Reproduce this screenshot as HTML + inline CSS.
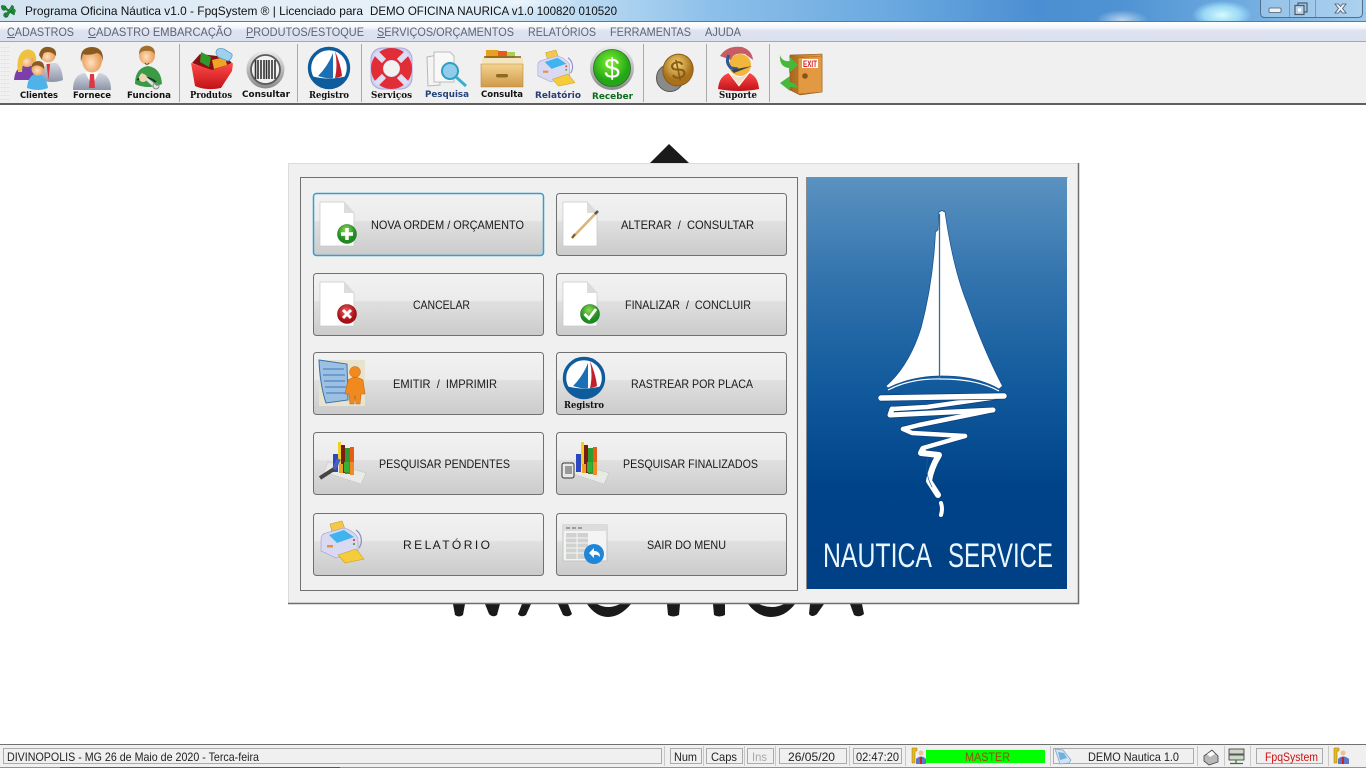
<!DOCTYPE html>
<html lang="pt"><head><meta charset="utf-8"><title>Programa Oficina Náutica</title>
<style>
html,body{margin:0;padding:0;width:1366px;height:768px;overflow:hidden;background:#fff}
svg{position:absolute;left:0;top:0;display:block}
text{font-family:"Liberation Sans",sans-serif;white-space:pre}
.ti{font-size:12px;fill:#111}
.me{font-size:12px;fill:#5c6474}
.tb{font-family:"DejaVu Sans",sans-serif;font-size:9px;font-weight:bold;fill:#111}
.ts{font-family:"DejaVu Serif",serif;font-size:9px;font-weight:bold;fill:#111}
.bt{font-size:12px;fill:#1a1a1a}
.st{font-size:12px;fill:#222}
</style></head><body>
<svg width="1366" height="768" viewBox="0 0 1366 768" xmlns="http://www.w3.org/2000/svg">
<defs>
<linearGradient id="tbar" x1="0" x2="1" y1="0" y2="0">
<stop offset="0" stop-color="#d3e3f1"/><stop offset=".2" stop-color="#e4eef7"/><stop offset=".33" stop-color="#e6f2fb"/><stop offset=".42" stop-color="#bfdcf3"/><stop offset=".52" stop-color="#8dc0ea"/><stop offset=".65" stop-color="#6ba9e0"/><stop offset=".76" stop-color="#4b8fd2"/><stop offset=".82" stop-color="#4f93d3"/><stop offset=".9" stop-color="#6ba8df"/><stop offset="1" stop-color="#9cc8ec"/>
</linearGradient>
<radialGradient id="glow"><stop offset="0" stop-color="#d8fbff"/><stop offset=".6" stop-color="#a8e6fb" stop-opacity=".8"/><stop offset="1" stop-color="#a8e6fb" stop-opacity="0"/></radialGradient>
<radialGradient id="glow2"><stop offset="0" stop-color="#fff" stop-opacity=".6"/><stop offset="1" stop-color="#fff" stop-opacity="0"/></radialGradient>
<linearGradient id="menu" x1="0" x2="0" y1="0" y2="1"><stop offset="0" stop-color="#fff"/><stop offset=".3" stop-color="#f4f6fb"/><stop offset=".45" stop-color="#dfe3f0"/><stop offset="1" stop-color="#dbe0ee"/></linearGradient>
<linearGradient id="btn" x1="0" x2="0" y1="0" y2="1"><stop offset="0" stop-color="#f2f2f2"/><stop offset=".44" stop-color="#ebebeb"/><stop offset=".45" stop-color="#e0e0e0"/><stop offset="1" stop-color="#cbcbcb"/></linearGradient>
<linearGradient id="blue" x1="0" x2="0" y1="0" y2="1"><stop offset="0" stop-color="#5a92c0"/><stop offset=".25" stop-color="#3273ad"/><stop offset=".5" stop-color="#125b9d"/><stop offset=".75" stop-color="#004389"/><stop offset="1" stop-color="#004085"/></linearGradient>
<linearGradient id="gray" x1="0" x2="0" y1="0" y2="1"><stop offset="0" stop-color="#d4d8e2"/><stop offset="1" stop-color="#8d94a8"/></linearGradient>
<radialGradient id="skin" cx=".45" cy=".6"><stop offset="0" stop-color="#ffe0bd"/><stop offset="1" stop-color="#e89f5e"/></radialGradient>
<linearGradient id="red" x1="0" x2="0" y1="0" y2="1"><stop offset="0" stop-color="#ff4a4a"/><stop offset="1" stop-color="#c01216"/></linearGradient>
<radialGradient id="grn" cx=".45" cy=".35"><stop offset="0" stop-color="#80f030"/><stop offset="1" stop-color="#22a816"/></radialGradient>
<radialGradient id="rb" cx=".45" cy=".35"><stop offset="0" stop-color="#f06060"/><stop offset="1" stop-color="#a80f14"/></radialGradient>
<radialGradient id="gb" cx=".45" cy=".3"><stop offset="0" stop-color="#8fdc50"/><stop offset="1" stop-color="#1f8a22"/></radialGradient>
<linearGradient id="wood" x1="0" x2="0" y1="0" y2="1"><stop offset="0" stop-color="#f3d391"/><stop offset="1" stop-color="#cf9a48"/></linearGradient>
<radialGradient id="gold" cx=".4" cy=".35"><stop offset="0" stop-color="#f6d77a"/><stop offset="1" stop-color="#a8701a"/></radialGradient>
<linearGradient id="door" x1="0" x2="1" y1="0" y2="0"><stop offset="0" stop-color="#a8661c"/><stop offset="1" stop-color="#e8a750"/></linearGradient>
<linearGradient id="silver" x1="0" x2="0" y1="0" y2="1"><stop offset="0" stop-color="#ececec"/><stop offset="1" stop-color="#8a8a8a"/></linearGradient>

<g id="reg">
<circle cx="0" cy="0" r="19.500" fill="#fff" stroke="#0f5c9c" stroke-width="3.400"/>
<path d="M-18,8 Q0,13 18,8 A19.500,19.500 0 0 1 -18,8Z" fill="#0f5c9c"/>
<path d="M4,-15 Q-1,-2 -11,8 Q-2,11 4,10Z" fill="#1a6fb5"/>
<path d="M6,-17 Q12,-3 13,8 Q9,10 6,10Q9,-3 6,-17Z" fill="#c3202c"/>
</g>
<g id="pr">
<path d="M10,3 L22,0 L26,11 L13,14Z" fill="#f2c94c" stroke="#c99a25" stroke-width=".6"/>
<path d="M1,18 Q1,13 6,12 L24,7 Q34,10 38,17 L38,31 L16,37 L1,30Z" fill="#d9d9f2" stroke="#a8a8d0" stroke-width=".7"/>
<path d="M9,14 L24,9 L34,16 L17,22Z" fill="#3fb4ee"/>
<path d="M36,9 A13,13 0 0 1 39,27" fill="none" stroke="#8f8fcc" stroke-width="1.300"/>
<path d="M18,34 L36,28 L44,38 L25,42Z" fill="#f4cc3c" stroke="#d0a01c" stroke-width=".6"/>
<circle cx="34" cy="19" r="1.100" fill="#d44"/><circle cx="34" cy="23" r="1.100" fill="#4a4"/>
<rect x="7" y="24" width="6" height="2.500" fill="#e8903c"/>
</g>
<g id="bars">
<path d="M10,20 L48,31 L43,42 L6,30Z" fill="#e9e9e6" stroke="#bbb" stroke-width=".6" stroke-dasharray="1.500 1"/>
<rect x="15" y="12" width="5" height="18" fill="#2c48c0"/>
<rect x="20" y="0" width="3" height="22" fill="#f0d020"/>
<rect x="23" y="3" width="4" height="28" fill="#7a1c10"/>
<rect x="27" y="6" width="5" height="26" fill="#2c9c30"/>
<rect x="32" y="5" width="4" height="22" fill="#e85c18"/>
<rect x="26" y="20" width="5" height="10" fill="#35b03a"/>
<rect x="21" y="22" width="4" height="9" fill="#f0a020"/>
<rect x="32" y="20" width="4" height="13" fill="#ef8a24"/>
</g>
<g id="doc"><path d="M0,0 H24 L34,11 V44 H0Z" fill="#fff" stroke="#c8c8c8" stroke-width=".7"/><path d="M24,0 L34,11 H24Z" fill="#dcdcdc"/></g>
</defs>

<!-- background -->
<rect width="1366" height="768" fill="#fff"/>
<!-- behind-panel logo -->
<path d="M650,163 L669,144 L689,163Z" fill="#1a1a1a"/>
<g fill="#1a1a1a">
<path d="M453,604H465L463,615Q459,618 455,615Z"/><path d="M485,604H500L497,615Q493,618 489,614Z"/><path d="M518,614L522,604H531L526,615Q521,618 518,614Z"/><path d="M558,604H568L572,614Q568,618 563,615Z"/>
<path d="M587,604H597Q608,610 620,604H631Q620,617 608,617Q596,617 587,604Z"/>
<path d="M667,604H680L679,615Q673,618 668,615Z"/><path d="M713,604H725L725,615Q719,618 714,615Z"/>
<path d="M748,604H759Q772,610 784,604H795Q785,617 771,617Q758,617 748,604Z"/>
<path d="M810,604H824L817,614Q812,618 809,614Z"/><path d="M850,604H862L864,614Q859,618 854,615Z"/>
</g>

<!-- title bar -->
<rect width="1366" height="21" fill="url(#tbar)"/>
<ellipse cx="520" cy="2" rx="60" ry="12" fill="url(#glow2)"/>
<ellipse cx="1122" cy="20" rx="26" ry="10" fill="url(#glow2)"/>
<ellipse cx="1222" cy="15" rx="30" ry="14" fill="url(#glow)"/>
<rect y="21" width="1366" height="1" fill="#64788a"/>
<!-- app icon -->
<g fill="#1f8c3a" stroke="#0f5c24" stroke-width=".5"><circle cx="4" cy="8" r="2.400"/><circle cx="13" cy="11" r="2.400"/><circle cx="6" cy="15" r="2.400"/><path d="M2,5L15,14L14,15L1,7Z"/><path d="M12,5L5,16L7,17L14,7Z"/></g>
<text class="ti" x="25" y="15" textLength="338" lengthAdjust="spacingAndGlyphs">Programa Oficina Náutica v1.0 - FpqSystem ® | Licenciado para</text>
<text class="ti" x="370" y="15" textLength="247" lengthAdjust="spacingAndGlyphs">DEMO OFICINA NAURICA v1.0 100820 010520</text>
<!-- window controls -->
<path d="M1260.500,0 V13 Q1260.500,17.500 1265,17.500 H1358 Q1362.500,17.500 1362.500,13 V0" fill="#c4dff3" fill-opacity=".4" stroke="#4f6f8c"/>
<path d="M1289.500,0V17M1315.500,0V17" stroke="#6f8fac" stroke-opacity=".8"/>
<rect x="1269" y="8" width="12" height="4.500" rx="1" fill="#eef2f6" stroke="#4a5a6a" stroke-width=".8"/>
<rect x="1298" y="3" width="9" height="9" fill="none" stroke="#4a5a6a" stroke-width="1.200"/><rect x="1295" y="5.500" width="9" height="9" fill="#b9d3ea" stroke="#4a5a6a" stroke-width="1.200"/><rect x="1298" y="8.500" width="3" height="3" fill="#fff"/>
<path d="M1335,4H1338.500L1340.500,6.500L1342.500,4H1346L1342.500,8.500L1346,13H1342.500L1340.500,10.500L1338.500,13H1335L1338.500,8.500Z" fill="#eef2f6" stroke="#4a5a6a" stroke-width=".8"/>

<!-- menu -->
<rect y="22" width="1366" height="19" fill="url(#menu)"/>
<rect y="41" width="1366" height="1" fill="#a8a8a8"/>
<text class="me" x="7" y="36" textLength="67" lengthAdjust="spacingAndGlyphs">CADASTROS</text>
<text class="me" x="88" y="36" textLength="144" lengthAdjust="spacingAndGlyphs">CADASTRO EMBARCAÇÃO</text>
<text class="me" x="246" y="36" textLength="118" lengthAdjust="spacingAndGlyphs">PRODUTOS/ESTOQUE</text>
<text class="me" x="377" y="36" textLength="137" lengthAdjust="spacingAndGlyphs">SERVIÇOS/ORÇAMENTOS</text>
<text class="me" x="528" y="36" textLength="68" lengthAdjust="spacingAndGlyphs">RELATÓRIOS</text>
<text class="me" x="610" y="36" textLength="81" lengthAdjust="spacingAndGlyphs">FERRAMENTAS</text>
<text class="me" x="705" y="36" textLength="36" lengthAdjust="spacingAndGlyphs">AJUDA</text>
<path d="M7,37.500H15M88,37.500H96M246,37.500H254M377,37.500H385" stroke="#5c6474"/>

<!-- toolbar -->
<rect y="42" width="1366" height="61" fill="#f0f0f0"/>
<rect y="103" width="1366" height="2" fill="#5f5f5f"/>
<path d="M179.500,44V102M297.500,44V102M361.500,44V102M643.500,44V102M706.500,44V102M769.500,44V102" stroke="#a9a9a9"/>
<path d="M2,47V100M5,47V100M8,47V100" stroke="#d0d0d0" stroke-width="1" stroke-dasharray="1 3"/>

<!-- Clientes -->
<path d="M40,80 Q41,66 50,63 H56 Q62,66 63,80 Q53,84 40,80Z" fill="url(#gray)"/><path d="M46.500,64H50L48.500,80Z" fill="#d6303a"/>
<circle cx="48" cy="55" r="7.500" fill="url(#skin)"/><path d="M39,55Q41,46 49,47Q57,48 56,56Q50,50 44,53Q42,56 42,60Z" fill="#8a5a20"/>
<path d="M14,80 Q15,68 23,66 H31 Q38,68 38,80Z" fill="#7a3fa8"/>
<circle cx="27" cy="60" r="7" fill="url(#skin)"/><path d="M18,72 Q16,58 22,52 Q28,47 34,52 Q38,58 35,70 L33,58 Q27,57 23,60 L22,72Z" fill="#eec13e"/>
<path d="M27,88 Q28,75 37,73 Q46,75 48,88 Q38,92 27,88Z" fill="#4fb3e8"/>
<circle cx="38" cy="69" r="6.500" fill="url(#skin)"/><path d="M31,68Q32,61 39,61Q45,62 44,69Q39,64 34,66Z" fill="#8a5a20"/>
<!-- Fornece -->
<path d="M73,90 Q73,75 84,73 L100,73 Q111,75 111,90Z" fill="url(#gray)"/>
<path d="M85,72H99L92,86Z" fill="#fff"/><path d="M90,74H94L95,88H89Z" fill="#dc3742"/>
<ellipse cx="92" cy="60" rx="10" ry="12.500" fill="url(#skin)"/>
<path d="M81,62 Q79,47 92,47 Q104,47 103,62 Q102,54 97,53 Q88,56 83,54Z" fill="#8a5a20"/>
<!-- Funciona -->
<path d="M135,84 Q135,68 148,66 Q161,68 162,84 Q148,90 135,84Z" fill="#3a9a45"/>
<path d="M137,80 Q146,74 156,82" stroke="#1d2b22" stroke-width="1.500" fill="none"/>
<ellipse cx="147" cy="55" rx="8" ry="9.500" fill="url(#skin)"/>
<path d="M139,54Q139,46 147,46Q155,46 155,54Q151,50 147,51Q143,50 139,54Z" fill="#a0702c"/>
<path d="M145,63Q147,66 149,63" stroke="#6b4a20" fill="none"/>
<path d="M141,74 L157,88" stroke="#e0e0e0" stroke-width="3"/><circle cx="156" cy="86" r="3" fill="none" stroke="#888"/><circle cx="143" cy="78" r="4" fill="#f2d3b1"/>
<text class="tb" x="20" y="98" textLength="38" lengthAdjust="spacingAndGlyphs">Clientes</text>
<text class="tb" x="73" y="98" textLength="38" lengthAdjust="spacingAndGlyphs">Fornece</text>
<text class="tb" x="127" y="98" textLength="44" lengthAdjust="spacingAndGlyphs">Funciona</text>

<!-- Produtos -->
<path d="M192,63 L200,54 L226,57 L232,63 L213,71Z" fill="#8a1014"/>
<path d="M201,52 L211,57 L209,67 L200,62Z" fill="#2e9a2a"/>
<path d="M212,60 L225,57 L227,65 L214,69Z" fill="#eea424"/>
<path d="M216,53 Q216,47 224,49 L232,54 Q233,58 228,61 L218,57Z" fill="#9fd0ee" stroke="#5b9ccb" stroke-width=".8"/>
<path d="M191,63 L212,70 L233,63 L232,71 L221,88 Q206,91 195,86Z" fill="url(#red)"/>
<!-- Consultar -->
<circle cx="265.500" cy="69.500" r="19" fill="url(#silver)"/><circle cx="265.500" cy="69.500" r="14.500" fill="#f2f2f4" stroke="#5a5a5a" stroke-width="1.800"/>
<path d="M255.500,60V79M258,60V79M261,60V79M264,60V79M266.500,60V79M269,60V79M272,60V79M275,60V79" stroke="#333" stroke-width="1.600"/>
<text class="ts" x="190" y="98" textLength="42" lengthAdjust="spacingAndGlyphs">Produtos</text>
<text class="tb" x="242" y="97" textLength="48" lengthAdjust="spacingAndGlyphs">Consultar</text>

<use href="#reg" x="329" y="68"/>
<text class="ts" x="309" y="98" textLength="40" lengthAdjust="spacingAndGlyphs">Registro</text>

<!-- Lifebuoy -->
<rect x="371" y="48" width="41" height="41" rx="11" fill="#cfcff0" stroke="#a8a8dc"/>
<circle cx="391.500" cy="68.500" r="14.500" fill="none" stroke="#e02d38" stroke-width="12"/>
<path d="M384,61L376,53M399,61L407,53M384,76L376,84M399,76L407,84" stroke="#dcdcf2" stroke-width="6"/>
<circle cx="391.500" cy="68.500" r="8" fill="#f2f2f2"/>
<text class="ts" x="371" y="98" textLength="41" lengthAdjust="spacingAndGlyphs">Serviços</text>
<!-- Pesquisa -->
<path d="M427,57L438,55L440,85L428,86Z" fill="#f4f4f4" stroke="#b8b8b8"/>
<path d="M434,52H450L454,56V82H434Z" fill="#f8f8f8" stroke="#bcbcbc"/>
<circle cx="450" cy="71" r="8" fill="#8fcdea" stroke="#2fa0c4" stroke-width="2"/>
<path d="M456,77L466,86" stroke="#3ab0d0" stroke-width="3"/>
<text class="tb" x="425" y="97" textLength="44" lengthAdjust="spacingAndGlyphs" style="fill:#24437c">Pesquisa</text>
<!-- Consulta drawer -->
<path d="M486,50H498L500,53H512L510,60H486Z" fill="#e8a020"/><rect x="498" y="51" width="9" height="5" fill="#e85c18"/><rect x="507" y="52" width="8" height="6" fill="#a8d050"/>
<path d="M482,58H523V66H482Z" fill="#f4e4c0"/><path d="M484,57H521" stroke="#7a5a20" stroke-width="1.500"/>
<path d="M481,64H523V87H481Z" fill="url(#wood)" stroke="#b98c3e" stroke-width=".6"/>
<rect x="496" y="74" width="12" height="3.500" rx="1.700" fill="#8f6a24"/>
<text class="tb" x="481" y="97" textLength="42" lengthAdjust="spacingAndGlyphs">Consulta</text>
<use href="#pr" transform="translate(537,50) scale(.86)"/>
<text class="tb" x="535" y="98" textLength="46" lengthAdjust="spacingAndGlyphs" style="fill:#2b3d72">Relatório</text>
<!-- Receber -->
<circle cx="612" cy="68" r="22" fill="url(#silver)"/><circle cx="612" cy="68" r="18.500" fill="url(#grn)" stroke="#2a6a2a" stroke-width=".8"/>
<text x="612" y="78" text-anchor="middle" style="font-size:28px;fill:#fff">$</text>
<text class="tb" x="592" y="99" textLength="41" lengthAdjust="spacingAndGlyphs" style="fill:#0b6b1c">Receber</text>
<!-- Coin -->
<circle cx="670" cy="78" r="13.500" fill="#8a8a8a" stroke="#555"/>
<ellipse cx="678" cy="70" rx="15" ry="16" fill="url(#gold)" stroke="#8a5c14" transform="rotate(20 678 70)"/>
<text x="678" y="79" text-anchor="middle" style="font-size:26px;fill:#8a5a14" transform="rotate(-12 678 70)">$</text>
<!-- Suporte -->
<path d="M718,89 Q719,76 729,73 L739,84 L749,73 Q758,76 759,89Q739,93 718,89Z" fill="url(#red)"/>
<path d="M729,73L739,86L749,73L739,77Z" fill="#f2e0c8" stroke="#fff" stroke-width=".8"/>
<circle cx="740" cy="65" r="11" fill="#f2b63c"/>
<path d="M720,56 Q727,45 742,47 Q752,50 753,60 L745,54 Q733,52 731,60Z" fill="#c85c64"/>
<path d="M729,55 Q725,62 731,68 L738,69" fill="none" stroke="#2c5a9c" stroke-width="3"/>
<path d="M731,70 L752,66 L734,73Z" fill="#444"/>
<text class="ts" x="719" y="98" textLength="38" lengthAdjust="spacingAndGlyphs">Suporte</text>
<!-- Exit -->
<path d="M790,55 L822,54 L822,92 L800,95 L790,90Z" fill="url(#door)" stroke="#8a5418" stroke-width=".6"/>
<path d="M798,58 L822,56 L822,92 L798,94Z" fill="#e29a42" stroke="#a8661c" stroke-width=".6"/>
<rect x="802" y="59" width="16" height="9" fill="#fff"/>
<text x="810" y="67" text-anchor="middle" style="font-size:9px;font-weight:bold;fill:#d81818" textLength="14" lengthAdjust="spacingAndGlyphs">EXIT</text>
<circle cx="805" cy="76" r="2.800" fill="#8a5418"/>
<path d="M780,55 Q782,62 790,61 L789,56 L798,65 L789,73 L789,68 Q779,67 780,55Z" fill="#46b93a"/>
<path d="M798,88 Q794,82 790,82 L790,76 L780,83 L790,91 L790,87 Q795,87 798,88Z" fill="#46b93a"/>

<!-- panel -->
<rect x="288.500" y="163.500" width="790" height="440" fill="#f0f0f0" stroke="#dcdcdc"/>
<path d="M288,603.500H1078.500V163" fill="none" stroke="#6e6e6e" stroke-width="1.500"/>
<rect x="300.500" y="177.500" width="497" height="413" fill="#f0f0f0" stroke="#707070"/>

<g stroke="#707070" fill="url(#btn)">
<rect x="313.500" y="193.500" width="230" height="62" rx="3" stroke="#33a0cc" stroke-width="1.500"/>
<rect x="556.500" y="193.500" width="230" height="62" rx="3"/>
<rect x="313.500" y="273.500" width="230" height="62" rx="3"/>
<rect x="556.500" y="273.500" width="230" height="62" rx="3"/>
<rect x="313.500" y="352.500" width="230" height="62" rx="3"/>
<rect x="556.500" y="352.500" width="230" height="62" rx="3"/>
<rect x="313.500" y="432.500" width="230" height="62" rx="3"/>
<rect x="556.500" y="432.500" width="230" height="62" rx="3"/>
<rect x="313.500" y="513.500" width="230" height="62" rx="3"/>
<rect x="556.500" y="513.500" width="230" height="62" rx="3"/>
</g>

<text class="bt" x="371" y="229" textLength="153" lengthAdjust="spacingAndGlyphs">NOVA ORDEM / ORÇAMENTO</text>
<text class="bt" x="621" y="229" textLength="133" lengthAdjust="spacingAndGlyphs">ALTERAR  /  CONSULTAR</text>
<text class="bt" x="413" y="309" textLength="57" lengthAdjust="spacingAndGlyphs">CANCELAR</text>
<text class="bt" x="625" y="309" textLength="126" lengthAdjust="spacingAndGlyphs">FINALIZAR  /  CONCLUIR</text>
<text class="bt" x="393" y="388" textLength="104" lengthAdjust="spacingAndGlyphs">EMITIR  /  IMPRIMIR</text>
<text class="bt" x="631" y="388" textLength="122" lengthAdjust="spacingAndGlyphs">RASTREAR POR PLACA</text>
<text class="bt" x="379" y="468" textLength="131" lengthAdjust="spacingAndGlyphs">PESQUISAR PENDENTES</text>
<text class="bt" x="623" y="468" textLength="135" lengthAdjust="spacingAndGlyphs">PESQUISAR FINALIZADOS</text>
<text class="bt" x="403" y="549" textLength="87" lengthAdjust="spacing">R E L A T Ó R I O</text>
<text class="bt" x="647" y="549" textLength="79" lengthAdjust="spacingAndGlyphs">SAIR DO MENU</text>

<!-- button icons -->
<use href="#doc" x="320" y="202"/>
<circle cx="347" cy="234" r="9.500" fill="url(#gb)" stroke="#2b7a2b" stroke-width=".6"/><path d="M347,228V240M341,234H353" stroke="#fff" stroke-width="3.500"/>
<use href="#doc" x="563" y="202"/>
<path d="M572,238 L597,212" stroke="#dbb47a" stroke-width="2.600"/><path d="M572,238 L575,234" stroke="#7a5a20" stroke-width="2"/><path d="M595,214L598,211" stroke="#555" stroke-width="2.600"/>
<use href="#doc" x="320" y="282"/>
<circle cx="347" cy="314" r="9.500" fill="url(#rb)" stroke="#8a1414" stroke-width=".6"/><path d="M343,310L351,318M351,310L343,318" stroke="#fff" stroke-width="3"/>
<use href="#doc" x="563" y="282"/>
<circle cx="590" cy="314" r="9.500" fill="url(#gb)" stroke="#1f7a2b" stroke-width=".6"/><path d="M584.500,314L589,318.500L596,309" fill="none" stroke="#fff" stroke-width="2.800"/>
<!-- Emitir -->
<rect x="319" y="360" width="46" height="46" fill="#e8e3cf"/>
<path d="M319,360 L347,364 L348,400 L326,403Q320,385 319,360Z" fill="#9cc0e4" stroke="#3d70a8" stroke-width="1"/>
<path d="M323,369H344M323,375H345M324,381H345M325,387H346M326,393H346" stroke="#5d8fc4" stroke-width="1.500"/>
<circle cx="355" cy="372" r="5.500" fill="#f08a1e" stroke="#c06410" stroke-width=".5"/>
<path d="M348,380Q355,375 363,380L365,394H361L360,404H356L355,395L354,404H350L349,394H345Z" fill="#f08a1e" stroke="#c06410" stroke-width=".6"/>
<!-- Registro btn -->
<use href="#reg" x="584" y="378"/>
<text class="ts" x="564" y="408" textLength="40" lengthAdjust="spacingAndGlyphs">Registro</text>
<!-- Bars -->
<use href="#bars" x="318" y="442"/>
<path d="M320,478L334,469" stroke="#444" stroke-width="4"/><path d="M334,469L339,459" stroke="#4a60c0" stroke-width="4"/>
<use href="#bars" x="561" y="442"/>
<rect x="562" y="463" width="12" height="15" rx="2" fill="#e8e8e8" stroke="#333"/><rect x="565" y="466" width="7" height="8" fill="#999"/>
<use href="#pr" transform="translate(320,521)"/>
<!-- Sair -->
<rect x="563" y="525" width="44" height="36" fill="#f4f4f4" stroke="#c4c4c4"/>
<rect x="563" y="525" width="44" height="6" fill="#dcdcdc"/>
<path d="M566,528H570M572,528H576M578,528H582" stroke="#888" stroke-width="1.500"/>
<rect x="566" y="533" width="22" height="26" fill="#cfd2cf"/>
<path d="M566,538H588M566,543H588M566,548H588M566,553H588M577,533V559" stroke="#f4f4f4"/>
<circle cx="594" cy="554" r="10" fill="#1f86d8"/>
<path d="M589,553L594,548V551Q600,551 600,557Q597,554 594,555V558Z" fill="#fff"/>

<!-- Blue image -->
<path d="M806.500,589.500V177.500H1067.500" fill="none" stroke="#8a8a8a"/>
<rect x="807" y="178" width="260" height="411" fill="url(#blue)"/>
<g transform="translate(807,178)">
<path d="M135,32.500 L138,34 Q146,90 160,125 Q178,175 195.500,208 L192,211 Q170,198 135,198 Q105,198 81,210 L79,208 Q102,188 114,150 Q126,105 128.500,54 L131,52 L132,34Z" fill="#fff" stroke="#0f4f90" stroke-width=".7"/>
<path d="M132.500,36V200" stroke="#35689c" stroke-width="1.300"/>
<path d="M81,212 Q104,200 135,201 Q170,201 192,213" fill="none" stroke="#fff" stroke-width="1.200"/>
<g fill="none" stroke-linejoin="round" stroke-linecap="round">
<g stroke="#0b3f7c"><path d="M116,271 L114,275 L132,277 Q124,290 122,303 L131,317" stroke-width="7.500"/><path d="M158,258 L116,270" stroke-width="6"/><path d="M96,251 L105,255 L158,258" stroke-width="6"/><path d="M186,232 L112,247 L96,251" stroke-width="6"/><path d="M85,231 L83,237 L186,232" stroke-width="6.500"/><path d="M197,218 L120,229 L85,231" stroke-width="6"/></g>
<path d="M116,271 L114,275 L132,277 Q124,290 122,303 L131,317" stroke="#fff" stroke-width="6"/>
<path d="M158,258 L116,270" stroke="#fff" stroke-width="4.500"/>
<path d="M96,251 L105,255 L158,258" stroke="#fff" stroke-width="4.500"/>
<path d="M186,232 L112,247 L96,251" stroke="#fff" stroke-width="4.500"/>
<path d="M85,231 L83,237 L186,232" stroke="#fff" stroke-width="5"/>
<path d="M197,218 L120,229 L85,231" stroke="#fff" stroke-width="4.500"/>
<path d="M74,220 L197,218" stroke="#0b3f7c" stroke-width="7"/>
<path d="M74,220 L197,218" stroke="#fff" stroke-width="5.500"/>
<path d="M134,325 Q136,331 134,337" stroke="#fff" stroke-width="4"/>
<path d="M121,280 Q117,294 125,309" stroke="#1c5b9c" stroke-width=".7"/>
</g>
</g>
<text x="823" y="567" textLength="109" lengthAdjust="spacingAndGlyphs" style="font-size:34px;fill:#e8f6ff">NAUTICA</text>
<text x="948" y="567" textLength="105" lengthAdjust="spacingAndGlyphs" style="font-size:34px;fill:#e8f6ff">SERVICE</text>

<!-- status bar -->
<rect y="744" width="1366" height="24" fill="#f0f0f0"/>
<rect y="744" width="1366" height="1" fill="#707070"/>
<rect y="767" width="1366" height="1" fill="#8a94a0"/>
<rect x="60" y="767" width="280" height="1" fill="#555"/>
<g fill="none" stroke="#ababab">
<rect x="3.500" y="748.500" width="658" height="15"/>
<path d="M664.500,746V766M703.500,746V766M744.500,746V766M775.500,746V766M849.500,746V766M905.500,746V766M1050.500,746V766M1197.500,746V766M1224.500,746V766M1250.500,746V766M1328.500,746V766" stroke="#c8c8c8"/>
<rect x="670.500" y="748.500" width="31" height="15"/><rect x="706.500" y="748.500" width="36" height="15"/><rect x="747.500" y="748.500" width="26" height="15"/><rect x="779.500" y="748.500" width="67" height="15"/><rect x="853.500" y="748.500" width="48" height="15"/><rect x="1053.500" y="748.500" width="140" height="15"/><rect x="1256.500" y="748.500" width="66" height="15"/>
</g>
<text class="st" x="7" y="761" textLength="252" lengthAdjust="spacingAndGlyphs">DIVINOPOLIS - MG 26 de Maio de 2020 - Terca-feira</text>
<text class="st" x="674" y="761" textLength="23" lengthAdjust="spacingAndGlyphs">Num</text>
<text class="st" x="711" y="761" textLength="26" lengthAdjust="spacingAndGlyphs">Caps</text>
<text class="st" x="752" y="761" textLength="15" lengthAdjust="spacingAndGlyphs" style="fill:#a8a8a8">Ins</text>
<text class="st" x="788" y="761" textLength="47" lengthAdjust="spacingAndGlyphs">26/05/20</text>
<text class="st" x="856" y="761" textLength="43" lengthAdjust="spacingAndGlyphs">02:47:20</text>
<rect x="926" y="750" width="119" height="13" fill="#00ff00"/>
<text class="st" x="965" y="761" textLength="45" lengthAdjust="spacingAndGlyphs" style="fill:#a04a10">MASTER</text>
<text class="st" x="1088" y="761" textLength="91" lengthAdjust="spacingAndGlyphs">DEMO Nautica 1.0</text>
<text class="st" x="1265" y="761" textLength="53" lengthAdjust="spacingAndGlyphs" style="fill:#d01010">FpqSystem</text>
<!-- status icons -->
<path d="M912,748H917V751H915V763H912Z" fill="#e8b820" stroke="#9a7a10" stroke-width=".5"/><circle cx="921" cy="753" r="2.500" fill="#f2c090"/><path d="M916,764V759Q921,754 926,759V764Z" fill="#5a78c8"/><path d="M920,757H922V764H920Z" fill="#d02020"/>
<path d="M1334,748H1339V751H1337V763H1334Z" fill="#e8b820" stroke="#9a7a10" stroke-width=".5"/><circle cx="1343" cy="753" r="2.500" fill="#f2c090"/><path d="M1338,764V759Q1343,754 1349,759V764Z" fill="#5a78c8"/><path d="M1342,757H1344V764H1342Z" fill="#d02020"/>
<path d="M1055,749L1063,750L1071,760L1069,763L1060,764Z" fill="#cfe4f4" stroke="#7aa4c8" stroke-width=".7"/><path d="M1058,752L1064,753L1067,758L1060,760Z" fill="#6fb0e0"/>
<path d="M1204,756L1212,750L1218,756V762L1209,765L1204,761Z" fill="#b8b8b8" stroke="#444" stroke-width=".8"/><path d="M1207,754L1212,751L1215,754L1210,757Z" fill="#fff"/>
<rect x="1229" y="749" width="15" height="5" fill="#d0d8c8" stroke="#333" stroke-width=".8"/><rect x="1229" y="755" width="15" height="5" fill="#d0d8c8" stroke="#333" stroke-width=".8"/><path d="M1236,760V763M1230,763.500H1243" stroke="#2a7a2a" stroke-width="1.200"/>
</svg>
</body></html>
